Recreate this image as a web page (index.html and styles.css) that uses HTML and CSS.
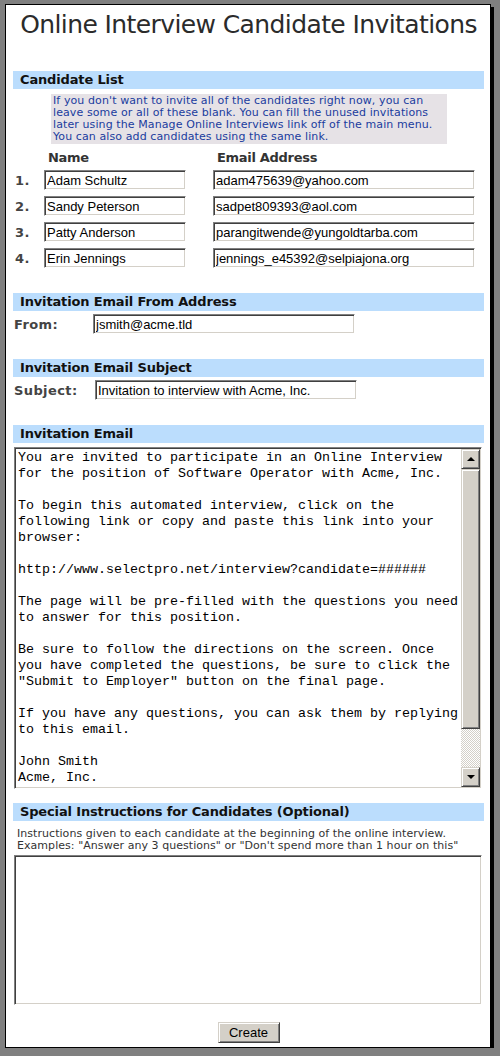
FILE: index.html
```html
<!DOCTYPE html>
<html>
<head>
    <meta charset="utf-8" />
    <title>Online Interview Candidate Invitations</title>
    <link rel="stylesheet" href="styles.css">
</head>
<body>
    <div class="page">
        <h1>Online Interview Candidate Invitations</h1>

        <div class="section-title">Candidate List</div>
        <div class="note">If you don't want to invite all of the candidates right now, you can<br>leave some or all of these blank. You can fill the unused invitations<br>later using the Manage Online Interviews link off of the main menu.<br>You can also add candidates using the same link.</div>
        <div class="candidates">
            <span></span>
            <span class="col-head">Name</span>
            <span class="col-head">Email Address</span>

            <span class="num">1.</span>
            <input class="field name-field" type="text" value="Adam Schultz">
            <input class="field email-field" type="text" value="adam475639@yahoo.com">

            <span class="num">2.</span>
            <input class="field name-field" type="text" value="Sandy Peterson">
            <input class="field email-field" type="text" value="sadpet809393@aol.com">

            <span class="num">3.</span>
            <input class="field name-field" type="text" value="Patty Anderson">
            <input class="field email-field" type="text" value="parangitwende@yungoldtarba.com">

            <span class="num">4.</span>
            <input class="field name-field" type="text" value="Erin Jennings">
            <input class="field email-field" type="text" value="jennings_e45392@selpiajona.org">
        </div>

        <div class="section-title spaced">Invitation Email From Address</div>
        <div class="form-row">
            <label class="row-label from-label" for="from">From:</label>
            <input class="field wide-field" id="from" type="text" value="jsmith@acme.tld">
        </div>

        <div class="section-title spaced">Invitation Email Subject</div>
        <div class="form-row">
            <label class="row-label subject-label" for="subject">Subject:</label>
            <input class="field wide-field" id="subject" type="text" value="Invitation to interview with Acme, Inc.">
        </div>

        <div class="section-title spaced">Invitation Email</div>
        <div class="mailbox">
            <textarea class="mail-text" wrap="off">You are invited to participate in an Online Interview
for the position of Software Operator with Acme, Inc.

To begin this automated interview, click on the
following link or copy and paste this link into your
browser:

http://www.selectpro.net/interview?candidate=######

The page will be pre-filled with the questions you need
to answer for this position.

Be sure to follow the directions on the screen. Once
you have completed the questions, be sure to click the
"Submit to Employer" button on the final page.

If you have any questions, you can ask them by replying
to this email.

John Smith
Acme, Inc.</textarea>
            <div class="scrollbar">
                <div class="scroll-btn up"></div>
                <div class="scroll-thumb"></div>
                <div class="scroll-track"></div>
                <div class="scroll-btn down"></div>
            </div>
        </div>

        <div class="section-title special">Special Instructions for Candidates (Optional)</div>
        <div class="hint">Instructions given to each candidate at the beginning of the online interview.<br>Examples: "Answer any 3 questions" or "Don't spend more than 1 hour on this"</div>
        <textarea class="instructions"></textarea>

        <div class="actions">
            <button class="create-btn" type="submit">Create</button>
        </div>
    </div>
</body>
</html>
```
FILE: styles.css
```css
html {
    background-color: #808080;
}

body {
    margin: 0;
    padding: 4px 0 0 5px;
    font-family: 'DejaVu Sans', Verdana, sans-serif;
    color: #333;
}

.page {
    width: 486px;
    box-sizing: border-box;
    background-color: white;
    border: 1px solid #000;
    box-shadow: 3px 3px 0 #000;
    padding: 5px 6px 4px 7px;
}

h1 {
    margin: 0;
    font-size: 25px;
    font-weight: normal;
    line-height: 30px;
    text-align: center;
    color: #2b2b2b;
    letter-spacing: -0.6px;
}

.section-title {
    margin-top: 31px;
    height: 18px;
    line-height: 18px;
    padding-left: 7px;
    background-color: #bbddfd;
    color: #111;
    font-size: 13px;
    font-weight: bold;
    letter-spacing: -0.15px;
}

.section-title.spaced {
    margin-top: 25px;
}

.section-title.special {
    margin-top: 14px;
}

.note {
    margin: 5px 0 0 38px;
    width: 396px;
    height: 50px;
    box-sizing: border-box;
    padding: 1px 2px;
    background-color: #e6e2e6;
    color: #1a3c9e;
    font-size: 11px;
    line-height: 12px;
    letter-spacing: 0.1px;
    white-space: nowrap;
}

.candidates {
    margin-top: 6px;
    display: grid;
    grid-template-columns: 31px 169px 262px;
    grid-template-rows: 14px repeat(4, 20px);
    row-gap: 6px;
}

.col-head {
    padding-left: 4px;
    font-size: 13px;
    font-weight: bold;
    line-height: 16px;
    letter-spacing: -0.3px;
}

.num {
    align-self: center;
    padding-left: 2px;
    font-size: 13px;
    font-weight: bold;
    color: #444;
    letter-spacing: 0.5px;
}

/* classic sunken text box */
.field {
    height: 20px;
    box-sizing: border-box;
    margin: 0;
    padding: 0 2px;
    border: 1px solid;
    border-color: #808080 #fff #fff #808080;
    box-shadow: inset 1px 1px 0 #404040, inset -1px -1px 0 #d4d0c8;
    font-family: 'Liberation Sans', Arial, sans-serif;
    font-size: 13px;
    color: #000;
    background: white;
    outline: none;
}

.name-field {
    width: 142px;
}

.email-field {
    width: 262px;
}

.form-row {
    margin-top: 3px;
    display: flex;
    align-items: center;
}

.row-label {
    padding-left: 1px;
    font-size: 13px;
    font-weight: bold;
    color: #444;
    letter-spacing: 0.4px;
}

.from-label {
    width: 79px;
}

.subject-label {
    width: 81px;
}

.wide-field {
    width: 262px;
}

.mailbox {
    margin: 4px 0 0 1px;
    width: 468px;
    height: 342px;
    box-sizing: border-box;
    display: flex;
    border: 1px solid;
    border-color: #808080 #fff #fff #808080;
    box-shadow: inset 1px 1px 0 #404040, inset -1px -1px 0 #d4d0c8;
    padding: 1px;
}

.mail-text {
    flex: 1;
    min-width: 0;
    margin: 0;
    padding: 1px 2px 0;
    border: none;
    resize: none;
    overflow: hidden;
    outline: none;
    font-family: 'Liberation Mono', 'Courier New', monospace;
    font-size: 13.33px;
    line-height: 16px;
    color: #000;
}

.scrollbar {
    width: 19px;
    display: flex;
    flex-direction: column;
}

/* raised 3d look for scrollbar parts and the button */
.scroll-btn,
.scroll-thumb,
.create-btn {
    box-sizing: border-box;
    background-color: #d4d0c8;
    border: 1px solid;
    border-color: #d4d0c8 #404040 #404040 #d4d0c8;
    box-shadow: inset 1px 1px 0 #fff, inset -1px -1px 0 #808080;
}

.scroll-btn {
    height: 20px;
    display: flex;
    align-items: center;
    justify-content: center;
}

.scroll-btn::after {
    content: "";
    border-left: 4px solid transparent;
    border-right: 4px solid transparent;
}

.scroll-btn.up::after {
    border-bottom: 4px solid #000;
}

.scroll-btn.down::after {
    border-top: 4px solid #000;
}

.scroll-thumb {
    height: 260px;
}

.scroll-track {
    flex: 1;
    background-color: #d4d0c8;
    background-image: repeating-conic-gradient(#fff 0 25%, #d4d0c8 0 50%);
    background-size: 2px 2px;
}

.hint {
    margin-top: 7px;
    padding-left: 4px;
    font-size: 11px;
    line-height: 12px;
    color: #333;
    letter-spacing: 0.05px;
    white-space: nowrap;
}

.instructions {
    display: block;
    margin: 3px 0 0 1px;
    width: 468px;
    height: 150px;
    box-sizing: border-box;
    border: 1px solid;
    border-color: #808080 #fff #fff #808080;
    box-shadow: inset 1px 1px 0 #404040, inset -1px -1px 0 #d4d0c8;
    resize: none;
    outline: none;
}

.actions {
    margin-top: 17px;
    text-align: center;
}

.create-btn {
    width: 62px;
    height: 21px;
    padding: 0;
    font-family: 'Liberation Sans', Arial, sans-serif;
    font-size: 13px;
    color: #000;
    cursor: pointer;
}
```
